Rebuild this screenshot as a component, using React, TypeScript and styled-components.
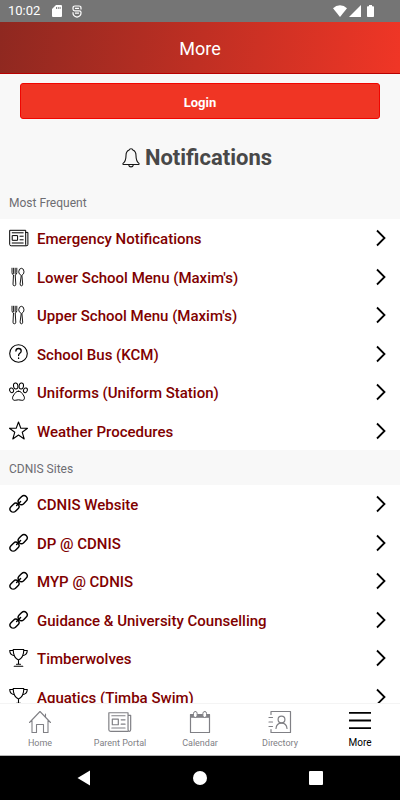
import React from "react";
import styled, { createGlobalStyle } from "styled-components";

const GlobalStyle = createGlobalStyle`
  *, *::before, *::after { box-sizing: border-box; }
  body { margin: 0; background: #f8f8f8; font-family: Roboto, sans-serif; }
  button { font-family: inherit; cursor: pointer; }
`;

const Screen = styled.div`
  display: flex;
  flex-direction: column;
  height: 100vh;
  overflow: hidden;
`;

const StatusBar = styled.div`
  display: flex;
  flex: none;
  align-items: center;
  justify-content: space-between;
  height: 22px;
  padding: 0 26px 0 8px;
  background: #757575;
  color: #fff;
  font-size: 13px;
  line-height: 22px;
`;

const StatusGroup = styled.div<{ $gap: number }>`
  display: flex;
  align-items: center;
  gap: ${({ $gap }) => $gap}px;
`;

const Clock = styled.span`
  margin-right: 2px;
`;

const Header = styled.header`
  display: flex;
  flex: none;
  align-items: center;
  justify-content: center;
  height: 52px;
  border-bottom: 1px solid #b80000;
  background: linear-gradient(100deg, #8e2820 0%, #f03626 100%);
`;

const PageTitle = styled.h1`
  margin: 0;
  padding-top: 3px;
  color: #fff;
  font-size: 18px;
  font-weight: 400;
  line-height: 24px;
`;

const Content = styled.main`
  flex: 1;
  min-height: 0;
  overflow-y: auto;
  scrollbar-width: none;
`;

const LoginButton = styled.button`
  display: block;
  width: calc(100% - 40px);
  height: 36px;
  margin: 9px 20px 0;
  padding: 2px 0 0;
  border: 1px solid #f00500;
  border-radius: 3px;
  background: #f03524;
  color: #fff;
  font-size: 13px;
  font-weight: 700;
`;

const Heading = styled.h2`
  display: flex;
  align-items: center;
  justify-content: center;
  gap: 5px;
  margin: 25px 0 0;
  padding-right: 6px;
  color: #484848;
  font-size: 22px;
  font-weight: 700;
  line-height: 28px;
`;

const SectionTitle = styled.h3<{ $first?: boolean }>`
  margin: 0;
  padding: ${({ $first }) => ($first ? "23px" : "11px")} 9px 8px;
  color: #6d6d72;
  font-size: 12px;
  font-weight: 400;
  line-height: 16px;
`;

const List = styled.ul`
  display: grid;
  grid-auto-rows: 1fr;
  min-height: 231px;
  margin: 0;
  padding: 0;
  background: #fff;
  list-style: none;
`;

const Item = styled.li`
  display: grid;
`;

const ItemLink = styled.a`
  display: flex;
  align-items: center;
  gap: 8px;
  padding: 0 13px 0 9px;
  color: #800000;
  font-size: 15px;
  font-weight: 500;
  line-height: 20px;
  text-decoration: none;

  svg { flex: none; color: #000; }
`;

const ItemLabel = styled.span`
  flex: 1;
  padding-top: 2px;
`;

const TabBar = styled.nav`
  display: grid;
  flex: none;
  grid-template-columns: repeat(5, 1fr);
  height: 53px;
  border-top: 1px solid #f4f4f4;
  border-bottom: 1px solid #b5b5b5;
  background: #fff;
`;

const Tab = styled.a<{ $active?: boolean }>`
  display: flex;
  flex-direction: column;
  align-items: center;
  gap: 3px;
  padding-top: 6px;
  color: ${({ $active }) => ($active ? "#000" : "#808085")};
  font-size: ${({ $active }) => ($active ? 10 : 9)}px;
  line-height: 12px;
  text-decoration: none;
  white-space: nowrap;
`;

const SystemBar = styled.div`
  display: flex;
  flex: none;
  align-items: center;
  justify-content: center;
  gap: 92px;
  height: 44px;
  background: #000;
`;

const SystemButton = styled.button`
  display: flex;
  align-items: center;
  justify-content: center;
  width: 24px;
  height: 24px;
  padding: 0;
  border: 0;
  background: none;
`;

const stroke = {
  fill: "none",
  stroke: "currentColor",
  strokeLinecap: "round",
  strokeLinejoin: "round",
} as const;

const SdCard = () => (
  <svg width="10" height="12" viewBox="0 0 10 12" aria-hidden="true">
    <path fill="#fff" d="M4 0h5a1 1 0 0 1 1 1v10a1 1 0 0 1-1 1H1a1 1 0 0 1-1-1V4z" />
    <path stroke="#757575" d="M4.5 2v2M6.3 2v2M8.1 2v2" strokeWidth=".9" />
  </svg>
);

const Shield = () => (
  <svg width="10" height="13" viewBox="0 0 10 13" aria-hidden="true" fill="none" stroke="#fff" strokeWidth="1.2">
    <path d="M9 4.600V3Q9 1 7 1H3Q1 1 1 3v1q0 1.800 1.800 1.800h4.400Q9 5.800 9 7.200V8q0 3.300-4 4.200Q1 11.300 1 8v-.800" />
    <path d="M3 3.300h4M3 8.200h4" />
  </svg>
);

const Wifi = () => (
  <svg width="14" height="12" viewBox="0 0 14 12" aria-hidden="true">
    <path fill="#fff" d="M0 3.2Q3 .3 7 .3t7 2.9L7 12z" />
  </svg>
);

const Signal = () => (
  <svg width="12" height="12" viewBox="0 0 12 12" aria-hidden="true">
    <path fill="#fff" d="M12 0v12H0z" />
  </svg>
);

const Battery = () => (
  <svg width="11" height="12" viewBox="-4 0 11 12" aria-hidden="true">
    <path fill="#fff" d="M2 0h3v1.2h1.200q.8 0 .8.800v9.200q0 .8-.8.800H.8Q0 12 0 11.200V2q0-.8.8-.8H2z" />
  </svg>
);

const Bell = () => (
  <svg width="18" height="20" viewBox="0 0 18 20" aria-hidden="true" {...stroke} stroke="#161616" strokeWidth="1.1">
    <path d="M7.2 2.1C7.2.3 10.8.3 10.8 2.1 13.2 3 14 5 14 7.500c0 4.600.6 6.200 3 7.900q.4 1.100-.7 1.100H1.700q-1.100 0-.7-1.100c2.400-1.700 3-3.300 3-7.900C4 5 4.800 3 7.200 2.100zM6.700 16.800Q7 18.900 9 18.900t2.300-2.100" />
  </svg>
);

const News = ({ size = 20 }: { size?: number }) => (
  <svg width={size} height={size} viewBox="0 0 20 20" aria-hidden="true" {...stroke} strokeWidth="1">
    <path d="M16.700 17.800H2.200Q.7 17.800.7 16.500V2.300h16v14q0 1.500 1.100 1.500t1.100-1.500V4.400h-2.200M3.200 4.800h11M3.200 15h11M11 8.200h3.200M11 11.800h3.200" />
    <path d="M3.600 7.600h5v4.700h-5z" />
  </svg>
);

const Cutlery = () => (
  <svg width="20" height="20" viewBox="0 0 20 20" aria-hidden="true" {...stroke} strokeWidth=".9">
    <path d="M3 1.200v4.500q0 1.900 1.500 2.200L4 17.200q0 1.600 1.400 1.600t1.400-1.600L6.200 7.900q1.600-.3 1.600-2.200V1.200M4.600 1.200v5.300M6.200 1.200v5.300" />
    <path d="M11.900 8.300Q9.700 7.200 9.700 4.800 10 1.300 12.400 1.300T15 4.800q0 2.400-2.100 3.500l.8 8.900q0 1.600-1.300 1.600t-1.300-1.600z" />
  </svg>
);

const Question = () => (
  <svg width="20" height="20" viewBox="0 0 20 20" aria-hidden="true" {...stroke} strokeWidth="1.1">
    <circle cx="9.500" cy="9.500" r="8.800" />
    <path d="M6.900 7q0-2.500 2.700-2.500 2.600 0 2.600 2.400 0 1.300-1.400 2.300-1.200.9-1.200 2.400M9.600 14v.4" strokeWidth="1.300" />
  </svg>
);

const Paw = () => (
  <svg width="20" height="20" viewBox="0 0 20 20" aria-hidden="true" {...stroke}>
    <ellipse cx="6.700" cy="4" rx="2.200" ry="3" transform="rotate(-10 6.700 4)" />
    <ellipse cx="12.300" cy="4" rx="2.200" ry="3" transform="rotate(10 12.300 4)" />
    <ellipse cx="2.600" cy="8.300" rx="1.900" ry="2.400" transform="rotate(-20 2.600 8.300)" />
    <ellipse cx="16.400" cy="8.300" rx="1.900" ry="2.400" transform="rotate(20 16.400 8.300)" />
    <path d="M9.500 9.200c2.500 0 3.300 1.800 4.700 3.700 2.500 3.300.9 6.200-2 5.300q-2.700-.8-5.400 0c-2.900.9-4.500-2-2-5.300C6.200 11 7 9.200 9.500 9.200z" />
  </svg>
);

const Star = () => (
  <svg width="20" height="20" viewBox="0 0 20 20" aria-hidden="true" {...stroke} strokeWidth="1.1">
    <path d="m9.500 1 2.300 6.200h6.700l-5.300 4 2 6.800-5.700-4-5.700 4 2-6.800-5.300-4h6.700z" />
  </svg>
);

const Chain = () => (
  <svg width="20" height="20" viewBox="0 0 20 20" aria-hidden="true" {...stroke} strokeWidth="1.400">
    <rect x="8.700" y="2.900" width="10" height="6.400" rx="3.200" transform="rotate(-45 13.700 6.100)" />
    <rect x=".5" y="10.500" width="10" height="6.400" rx="3.200" transform="rotate(-45 5.500 13.700)" />
    <path d="m7.600 11.600 4-4" />
  </svg>
);

const Trophy = () => (
  <svg width="20" height="20" viewBox="0 0 20 20" aria-hidden="true" {...stroke} strokeWidth="1.1">
    <path d="M4.200 1.500h10.600c0 5-1.100 8.700-5.300 10.400C5.300 10.200 4.200 6.500 4.200 1.500zM4.300 2.500H.7q.2 4.500 4.800 5.200M14.700 2.500h3.600q-.2 4.500-4.800 5.200M9.500 12v4M5.200 18.300h8.600M7.500 16.200h4" />
  </svg>
);

const Chevron = () => (
  <svg width="12" height="18" viewBox="0 0 12 18" aria-hidden="true" fill="none" stroke="currentColor" strokeWidth="1.800">
    <path d="m2 1.500 7.500 7.500L2 16.500" />
  </svg>
);

const House = () => (
  <svg width="24" height="24" viewBox="0 0 24 24" aria-hidden="true" {...stroke} strokeWidth="1.100">
    <path d="M1.500 12.500 12 1.500l10.500 11M4 10.500V22.500h4.500v-8h7v8H20v-12M17.500 4v3" />
  </svg>
);

const CalendarIcon = () => (
  <svg width="24" height="24" viewBox="0 0 24 24" aria-hidden="true" {...stroke} strokeWidth="1.200">
    <path d="M2.500 4.500h19v18h-19z" />
    <path d="M2 4h20v3.800H2z" fill="currentColor" stroke="none" />
    <rect x="5.500" y="1.500" width="3.600" height="6" rx="1.800" fill="#fff" strokeWidth="1" />
    <rect x="14.900" y="1.500" width="3.600" height="6" rx="1.800" fill="#fff" strokeWidth="1" />
  </svg>
);

const DirectoryIcon = () => (
  <svg width="24" height="24" viewBox="0 0 24 24" aria-hidden="true" {...stroke} strokeWidth="1.200">
    <path d="M3 4.500v-3h19.500v21H3v-3M1 7.500h3.500M1 12h3.500M1 16.500h3.500" />
    <circle cx="13.500" cy="9.500" r="3.400" />
    <path d="M8 18.500q.5-5.300 5.500-5.300t5.500 5.300" />
  </svg>
);

const MenuIcon = () => (
  <svg width="24" height="24" viewBox="0 0 24 24" aria-hidden="true" fill="none" stroke="currentColor" strokeWidth="1.800">
    <path d="M1 2.800h22M1 10.500h22M1 18.200h22" />
  </svg>
);

type Entry = { label: string; icon: React.ReactNode };

const frequent: Entry[] = [
  { label: "Emergency Notifications", icon: <News /> },
  { label: "Lower School Menu (Maxim's)", icon: <Cutlery /> },
  { label: "Upper School Menu (Maxim's)", icon: <Cutlery /> },
  { label: "School Bus (KCM)", icon: <Question /> },
  { label: "Uniforms (Uniform Station)", icon: <Paw /> },
  { label: "Weather Procedures", icon: <Star /> },
];

const sites: Entry[] = [
  { label: "CDNIS Website", icon: <Chain /> },
  { label: "DP @ CDNIS", icon: <Chain /> },
  { label: "MYP @ CDNIS", icon: <Chain /> },
  { label: "Guidance & University Counselling", icon: <Chain /> },
  { label: "Timberwolves", icon: <Trophy /> },
  { label: "Aquatics (Timba Swim)", icon: <Trophy /> },
];

const tabs: (Entry & { active?: boolean })[] = [
  { label: "Home", icon: <House /> },
  { label: "Parent Portal", icon: <News size={24} /> },
  { label: "Calendar", icon: <CalendarIcon /> },
  { label: "Directory", icon: <DirectoryIcon /> },
  { label: "More", icon: <MenuIcon />, active: true },
];

const LinkList = ({ entries }: { entries: Entry[] }) => (
  <List>
    {entries.map(({ label, icon }) => (
      <Item key={label}>
        <ItemLink href="#">
          {icon}
          <ItemLabel>{label}</ItemLabel>
          <Chevron />
        </ItemLink>
      </Item>
    ))}
  </List>
);

export default function App() {
  return (
    <Screen>
      <GlobalStyle />
      <StatusBar>
        <StatusGroup $gap={10}>
          <Clock>10:02</Clock>
          <SdCard />
          <Shield />
        </StatusGroup>
        <StatusGroup $gap={2}>
          <Wifi />
          <Signal />
          <Battery />
        </StatusGroup>
      </StatusBar>
      <Header>
        <PageTitle>More</PageTitle>
      </Header>
      <Content>
        <LoginButton type="button">Login</LoginButton>
        <Heading>
          <Bell />
          Notifications
        </Heading>
        <SectionTitle $first>Most Frequent</SectionTitle>
        <LinkList entries={frequent} />
        <SectionTitle>CDNIS Sites</SectionTitle>
        <LinkList entries={sites} />
      </Content>
      <TabBar>
        {tabs.map(({ label, icon, active }) => (
          <Tab key={label} href="#" $active={active} aria-current={active ? "page" : undefined}>
            {icon}
            {label}
          </Tab>
        ))}
      </TabBar>
      <SystemBar>
        <SystemButton type="button" aria-label="Back">
          <svg width="14" height="16" viewBox="0 0 14 16"><path fill="#fff" d="M13 .5v15L.5 8z" /></svg>
        </SystemButton>
        <SystemButton type="button" aria-label="Home screen">
          <svg width="14" height="14" viewBox="0 0 14 14"><circle cx="7" cy="7" r="7" fill="#fff" /></svg>
        </SystemButton>
        <SystemButton type="button" aria-label="Recent apps">
          <svg width="14" height="14" viewBox="0 0 14 14"><rect width="14" height="14" rx="1" fill="#fff" /></svg>
        </SystemButton>
      </SystemBar>
    </Screen>
  );
}
